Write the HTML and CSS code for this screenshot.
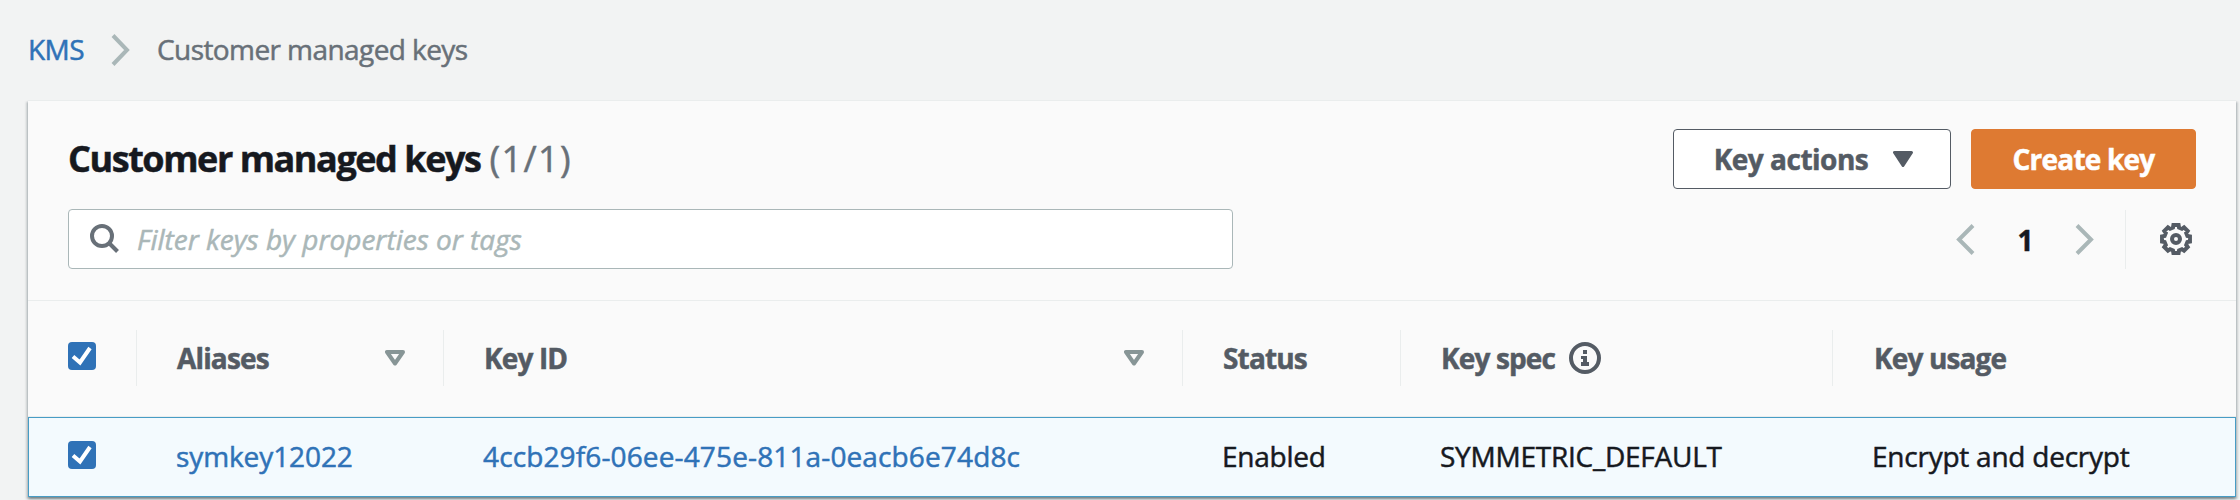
FILE: index.html
```
<!DOCTYPE html>
<html lang="en">
<head>
<meta charset="utf-8">
<title>Customer managed keys</title>
<link rel="stylesheet" href="styles.css">
</head>
<body>
<nav class="breadcrumb">
  <a class="link crumb-root">KMS</a>
  <svg class="crumb-chevron" width="20" height="32" viewBox="0 0 20 32"><path d="M2 1.5 16 16 2 30.5"/></svg>
  <span class="crumb-current">Customer managed keys</span>
</nav>
<main class="panel">
  <header class="panel-header">
    <div class="title-row">
      <h1 class="title">Customer managed keys</h1><span class="count">(1/1)</span>
      <div class="actions">
        <button class="btn btn-normal"><span>Key actions</span>
          <svg width="20" height="16" viewBox="0 0 20 16"><path class="caret" d="M1.5 1.5h17L10 14.5z"/></svg>
        </button>
        <button class="btn btn-primary">Create key</button>
      </div>
    </div>
    <div class="tools-row">
      <div class="search">
        <svg width="30" height="30" viewBox="0 0 30 30"><circle cx="12" cy="12" r="10"/><path d="m19 19 8.5 8.5"/></svg>
        <span class="placeholder">Filter keys by properties or tags</span>
      </div>
      <div class="pager">
        <svg class="chev" width="20" height="32" viewBox="0 0 20 32"><path d="M18 2.5 4 16.5l14 14"/></svg>
        <span class="page">1</span>
        <svg class="chev" width="20" height="32" viewBox="0 0 20 32"><path d="m2 2.5 14 14-14 14"/></svg>
      </div>
      <div class="settings">
        <svg width="32" height="32" viewBox="-16 -16 32 32"><path d="M-3.05-11.4-2.6-13.95 2.6-13.95 3.05-11.4 5.9-10.22 8.03-11.7 11.7-8.03 10.22-5.9 11.4-3.05 13.95-2.6 13.95 2.6 11.4 3.05 10.22 5.9 11.7 8.03 8.03 11.7 5.9 10.22 3.05 11.4 2.6 13.95-2.6 13.95-3.05 11.4-5.9 10.22-8.03 11.7-11.7 8.03-10.22 5.9-11.4 3.05-13.95 2.6-13.95-2.6-11.4-3.05-10.22-5.9-11.7-8.03-8.03-11.7-5.9-10.22z"/><circle r="4"/></svg>
      </div>
    </div>
  </header>
  <div class="grid head">
    <div class="cell"><span class="checkbox"><svg width="28" height="28" viewBox="0 0 28 28"><path d="m5 14.5 7 6L22 6"/></svg></span></div>
    <div class="cell"><span>Aliases</span><svg class="sort" width="20" height="16" viewBox="0 0 20 16"><path d="M2 2h16l-8 11.5z"/></svg></div>
    <div class="cell"><span>Key ID</span><svg class="sort" width="20" height="16" viewBox="0 0 20 16"><path d="M2 2h16l-8 11.5z"/></svg></div>
    <div class="cell"><span>Status</span></div>
    <div class="cell"><span>Key spec</span><svg class="info" width="32" height="32" viewBox="0 0 32 32"><circle cx="16" cy="16" r="14"/><path d="M14 8h4v4h-4zM12 14h6v6h2v4h-8v-4h2v-3h-2z"/></svg></div>
    <div class="cell"><span>Key usage</span></div>
  </div>
  <div class="grid row">
    <div class="cell"><span class="checkbox"><svg width="28" height="28" viewBox="0 0 28 28"><path d="m5 14.5 7 6L22 6"/></svg></span></div>
    <div class="cell"><a class="link alias">symkey12022</a></div>
    <div class="cell"><a class="link key-id">4ccb29f6-06ee-475e-811a-0eacb6e74d8c</a></div>
    <div class="cell">Enabled</div>
    <div class="cell">SYMMETRIC_DEFAULT</div>
    <div class="cell">Encrypt and decrypt</div>
  </div>
</main>
</body>
</html>
```
FILE: styles.css
```
* { box-sizing: border-box; }
body {
  margin: 0;
  height: 500px;
  overflow: hidden;
  background: #f2f3f3;
  color: #16191f;
  font: 28px/40px "Open Sans", "Noto Sans", sans-serif;
  -webkit-text-stroke: .5px;
  white-space: nowrap;
}
svg { display: block; flex: none; fill: none; stroke-width: 4; }
.link { color: #2f72b7; }

.breadcrumb {
  display: flex;
  align-items: center;
  height: 100px;
  padding-left: 28px;
}
.crumb-root { width: 83px; margin-bottom: 2px; letter-spacing: -.6px; }
.crumb-chevron { stroke: #aab7b8; }
.crumb-current { margin: 0 0 2px 26px; color: #687078; letter-spacing: -.58px; }

.panel {
  width: 2208px;
  height: 397px;
  margin-left: 28px;
  background: #fafafa;
  border-top: 1px solid #eaeded;
  box-shadow: 0 2px 2px rgba(0, 28, 36, .3), 2px 2px 2px rgba(0, 28, 36, .15), -2px 2px 2px rgba(0, 28, 36, .15);
}
.panel-header {
  height: 200px;
  padding: 28px 40px 0;
  border-bottom: 1px solid #eaeded;
}
.title-row { display: flex; align-items: center; height: 60px; }
.title {
  margin: 0;
  font-size: 36px;
  font-weight: 700;
  letter-spacing: -1.45px;
}
.count { margin-left: 9px; font-size: 36px; color: #687078; letter-spacing: 1.4px; }
.actions { display: flex; gap: 20px; margin-left: auto; }
.btn {
  display: flex;
  align-items: center;
  justify-content: center;
  gap: 25px;
  height: 60px;
  padding: 0 0 1px;
  border: 1px solid #545b64;
  border-radius: 4px;
  font: inherit;
  font-weight: 700;
  letter-spacing: -.8px;
}
.btn-normal { width: 278px; padding-left: 3px; background: #fff; color: #545b64; letter-spacing: -.5px; }
.caret { fill: #545b64; stroke: #545b64; stroke-width: 3; stroke-linejoin: round; }
.btn-primary { width: 225px; background: #de7a32; border-color: #de7a32; color: #fff; }

.tools-row { display: flex; align-items: center; height: 60px; margin-top: 20px; }
.search {
  display: flex;
  align-items: center;
  width: 1165px;
  height: 60px;
  padding-left: 21px;
  background: #fff;
  border: 1px solid #aab7b8;
  border-radius: 4px;
  stroke: #687078;
}
.placeholder { margin: 0 0 1px 17px; font-style: italic; color: #aab7b8; stroke: none; }
.pager { display: flex; align-items: center; margin-left: auto; }
.chev { stroke: #aab7b8; }
.page { width: 100px; padding: 1px 0 0 1px; text-align: center; font-weight: 700; }
.settings {
  display: flex;
  align-items: center;
  height: 59px;
  margin-left: 30px;
  padding-left: 34px;
  margin-right: 4px;
  border-left: 1px solid #eaeded;
  stroke: #545b64;
}

.grid { display: grid; grid-template-columns: 109px 307px 739px 218px 432px 1fr; }
.cell { display: flex; align-items: center; padding-left: 40px; }
.head {
  height: 116px;
  padding: 29px 0 30px;
  border-bottom: 1px solid #eaeded;
  color: #545b64;
  font-weight: 700;
  letter-spacing: -.85px;
}
.head .cell { border-right: 1px solid #eaeded; }
.head .cell:last-child { border-right: 0; padding-left: 41px; }
.sort { margin: 0 38px 0 auto; stroke: #879596; stroke-linejoin: round; }
.info { margin-left: 14px; stroke: #545b64; }
.info path { fill: #545b64; stroke: none; }
.row {
  height: 80px;
  background: #f3fafe;
  border: 1px solid #479cc5;
  letter-spacing: -.24px;
}
.row .cell { padding: 0 0 2px 38px; }
.row .cell:first-child { padding-left: 39px; }
.row .alias { letter-spacing: -.1px; }
.key-id { letter-spacing: .13px; }
.checkbox { margin-bottom: 4px; border-radius: 4px; background: #2f72b7; stroke: #fff; }
.row .checkbox { margin-bottom: 2px; }
```
